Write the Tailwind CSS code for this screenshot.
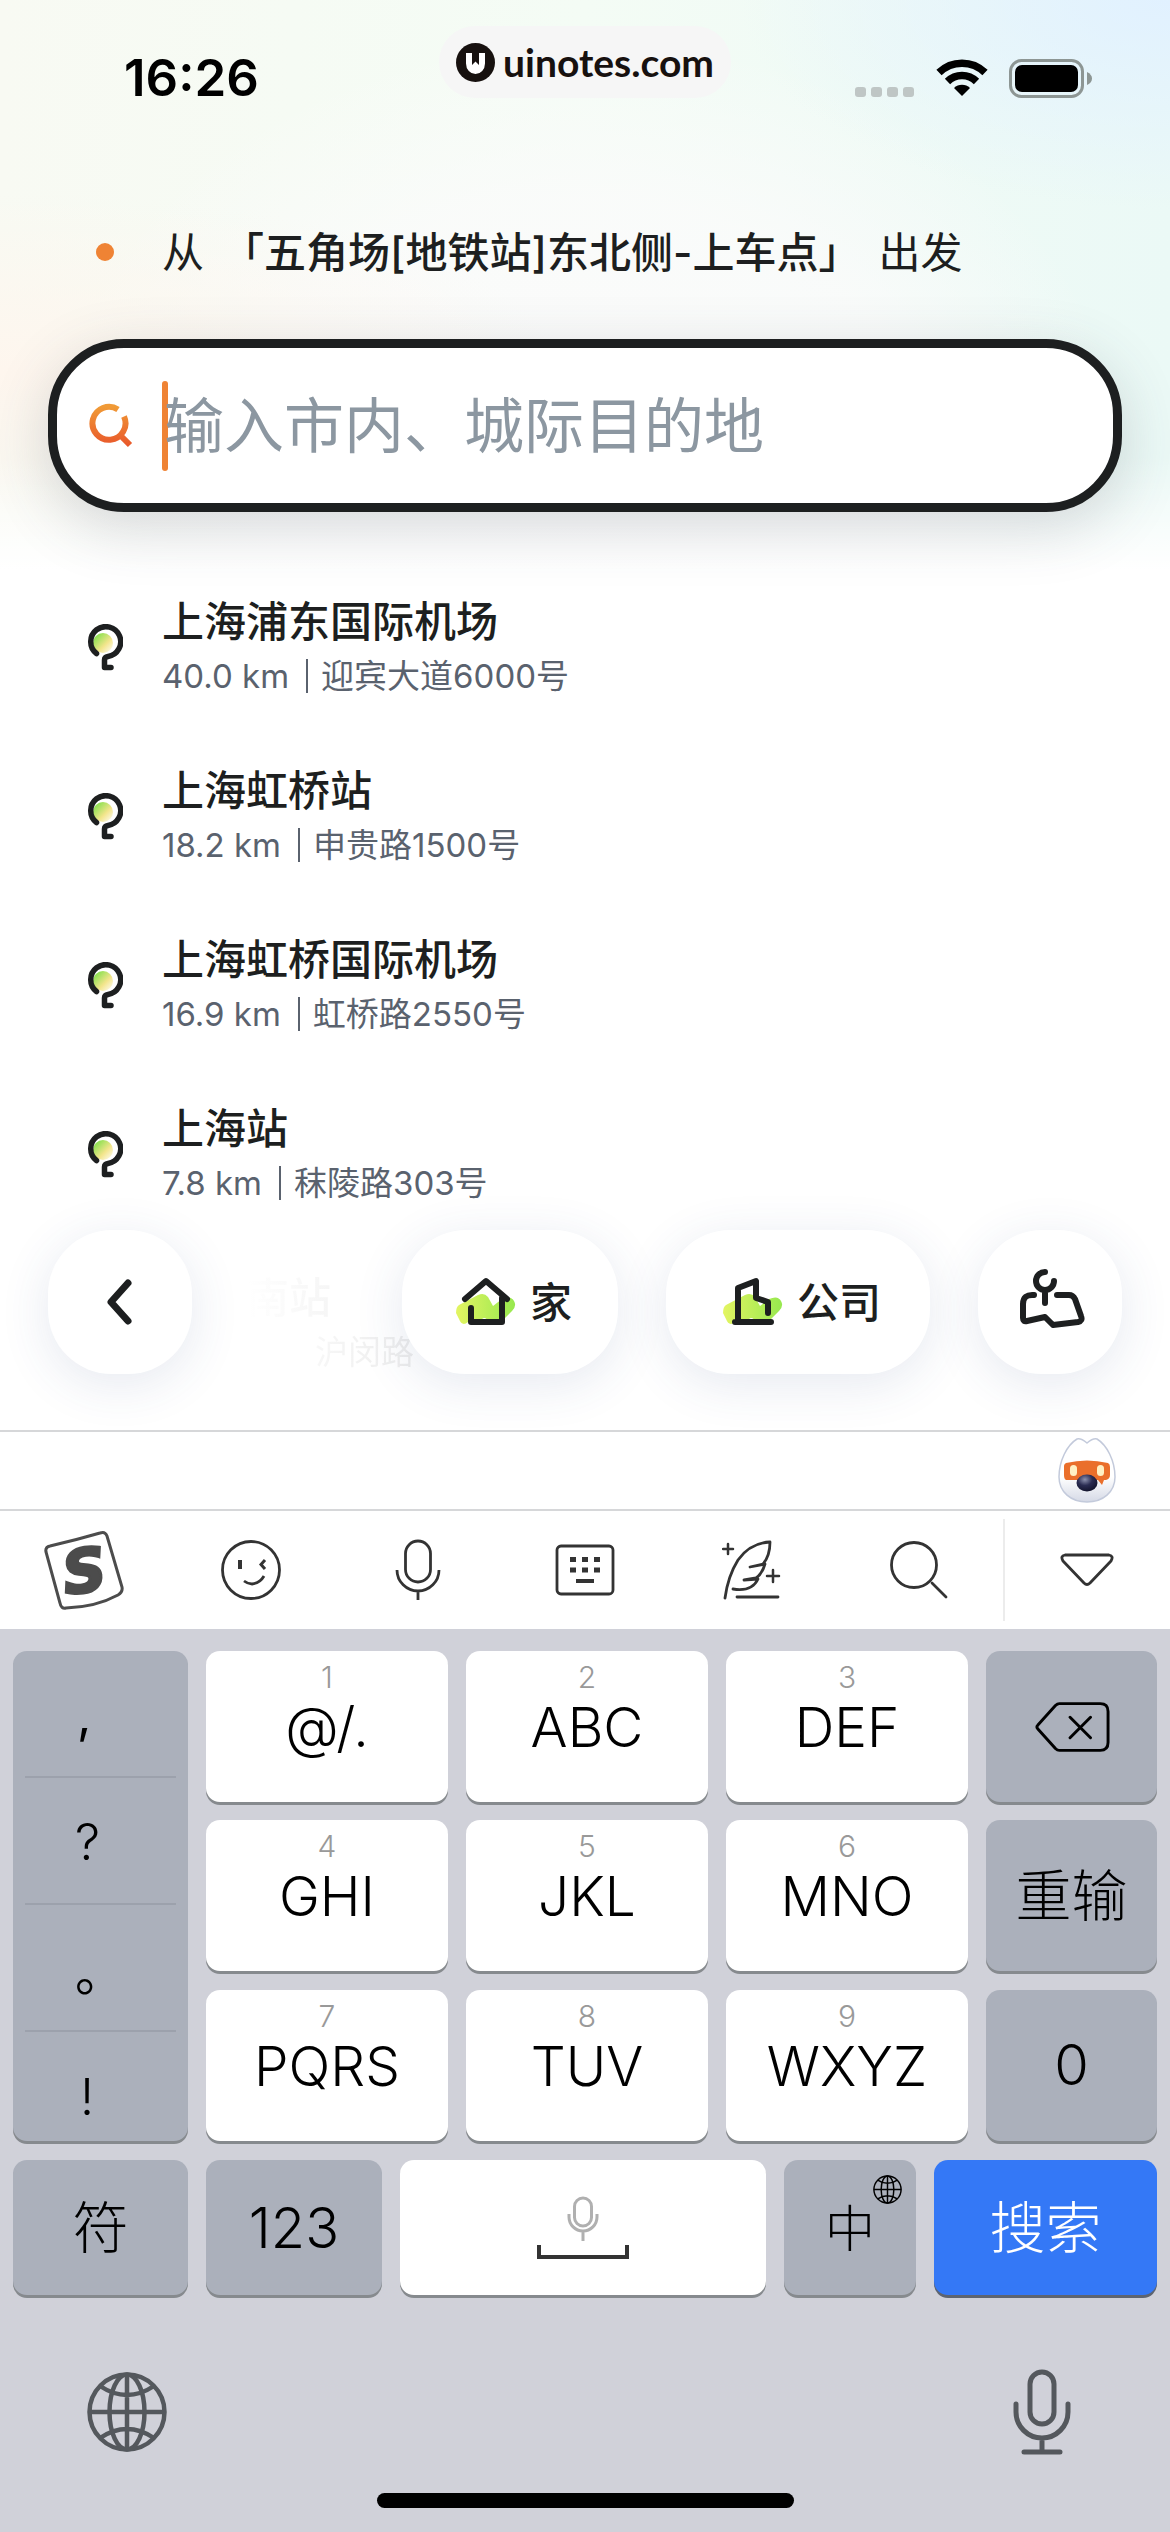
<!DOCTYPE html>
<html lang="zh-CN">
<head>
    <meta charset="UTF-8">
    <meta name="viewport" content="width=device-width, initial-scale=1.0">
    <title>输入目的地</title>
    <script src="https://cdn.jsdelivr.net/npm/@tailwindcss/browser@4"></script>
</head>
<body class="bg-white font-['Inter','Noto_Sans_CJK_SC',sans-serif] text-[#1d1f20]">

    <!-- Shared symbols -->
    <svg class="absolute size-0" aria-hidden="true">
        <defs>
            <linearGradient id="pinFill" x1="0" y1="0" x2="1" y2="1">
                <stop offset="0.1" stop-color="#7fe04a"/>
                <stop offset="0.6" stop-color="#f3e58c"/>
                <stop offset="1" stop-color="#ffffff"/>
            </linearGradient>
            <linearGradient id="searchStroke" x1="0" y1="0" x2="0" y2="1">
                <stop offset="0" stop-color="#f09a36"/>
                <stop offset="1" stop-color="#e9592b"/>
            </linearGradient>
            <linearGradient id="leafFill" x1="0" y1="0" x2="1" y2="0">
                <stop offset="0" stop-color="#e3f562"/>
                <stop offset="1" stop-color="#97e84f"/>
            </linearGradient>
        </defs>
        <symbol id="pin" viewBox="0 0 36 48">
            <circle cx="16" cy="19" r="10" fill="url(#pinFill)"/>
            <path d="M9.500 29.500A15 15 0 1 1 21 32.500Q17.500 33 17.500 36V43.500H24" fill="none" stroke="#1d1f20" stroke-width="5.500" stroke-linecap="round" stroke-linejoin="round"/>
        </symbol>
        <symbol id="globe" viewBox="0 0 80 80">
            <g fill="none" stroke="currentColor">
                <circle cx="40" cy="40" r="37.500"/>
                <ellipse cx="40" cy="40" rx="17.500" ry="37.500"/>
                <path d="M40 2V78M2 40H78M13 14Q40 32 67 14M13 66Q40 48 67 66"/>
            </g>
        </symbol>
    </svg>

    <div class="flex min-h-screen flex-col">
        <main class="relative flex flex-1 flex-col overflow-hidden">
            <!-- Soft colour wash behind the header -->
            <div class="absolute inset-x-0 top-0 -z-10 h-[570px] bg-[linear-gradient(180deg,transparent_80%,#ffffff_100%),radial-gradient(ellipse_at_100%_0%,#e1f1ff_0%,transparent_26%),radial-gradient(ellipse_at_0%_65%,#fef6ee_0%,transparent_34%),radial-gradient(ellipse_at_50%_80%,#fbfbfb_0%,#fbfbfbcc_40%,transparent_65%),linear-gradient(90deg,#f8faf3_0%,#f4fcf5_50%,#ebf9f6_100%)]"></div>

            <!-- Status bar -->
            <header class="relative flex h-[156px] items-center justify-between pr-[78px] pl-[124px]">
                <div class="text-[51px] font-semibold text-black">16:26</div>
                <div class="absolute top-[26px] left-1/2 flex h-[72px] w-[292px] -translate-x-1/2 items-center justify-center gap-2 rounded-[36px] bg-[#f6f6f6]">
                    <svg class="size-[39px]" viewBox="0 0 39 39">
                        <circle cx="19.500" cy="19.500" r="19.500" fill="#17110f"/>
                        <path d="M10 10H16V22L19.500 18.500L23 22V10H29V20.500A9.500 10.500 0 0 1 10 20.500Z" fill="#fff"/>
                    </svg>
                    <span class="font-['Lato',sans-serif] text-[39px] leading-[44px] font-bold text-[#17110f]">uinotes.com</span>
                </div>
                <div class="flex h-[39px] items-center gap-[21px]">
                    <svg class="h-[39px] w-[60px]" viewBox="0 0 60 39" fill="#bfc6c5">
                        <rect x="0" y="28" width="11" height="10" rx="3"/>
                        <rect x="16" y="28" width="11" height="10" rx="3"/>
                        <rect x="32" y="28" width="11" height="10" rx="3"/>
                        <rect x="48" y="28" width="11" height="10" rx="3"/>
                    </svg>
                    <svg class="h-[38px] w-[52px]" viewBox="0 0 52 38">
                        <g fill="none" stroke="#000" stroke-width="7.500">
                            <path d="M3 13.500A33 33 0 0 1 49 13.500"/>
                            <path d="M11.500 22.500A20.500 20.500 0 0 1 40.500 22.500"/>
                        </g>
                        <path d="M26 37L18 29A11.500 11.500 0 0 1 34 29Z"/>
                    </svg>
                    <svg class="h-[39px] w-[83px]" viewBox="0 0 83 39">
                        <rect x="1.500" y="1.500" width="72" height="36" rx="11" fill="none" stroke="#8d9694" stroke-width="3"/>
                        <rect x="6" y="6" width="63" height="27" rx="7"/>
                        <path d="M78 13Q83 15.500 83 19.500T78 26Z" fill="#8d9694"/>
                    </svg>
                </div>
            </header>

            <!-- Start point -->
            <div class="mx-12 mt-[60px] flex h-[72px] items-center text-[42px]">
                <span class="ml-12 size-[18px] rounded-full bg-[#ef8334]"></span>
                <p class="ml-[48px] flex items-center gap-[18px]">
                    <span>从</span>
                    <strong class="font-medium">「五角场[地铁站]东北侧-上车点」</strong>
                    <span>出发</span>
                </p>
            </div>

            <!-- Destination -->
            <label class="mx-12 mt-[51px] flex h-[173px] items-center rounded-[76px] border-[9px] border-[#1d1f20] bg-white pr-10 pl-[31px] shadow-[0_16px_60px_rgba(60,70,85,0.2)]">
                <svg class="size-[46px]" viewBox="0 0 46 46" fill="none" stroke="url(#searchStroke)" stroke-width="6">
                    <path d="M30 6.500A16.500 16.500 0 1 0 36 13.500M31 31L42 42"/>
                </svg>
                <span class="ml-[28px] h-[90px] w-[6px] shrink-0 rounded-full bg-[#ef8334]"></span>
                <input type="text" placeholder="输入市内、城际目的地" aria-label="目的地" class="-ml-1 min-w-0 flex-1 text-[60px] leading-[90px] outline-none placeholder:text-[#8c97a1]">
            </label>

            <!-- Suggestions -->
            <ul class="mt-[82px] flex flex-col gap-[61px] px-[87px]">
                <li class="flex items-center gap-[39px]">
                    <svg class="h-[48px] w-9"><use href="#pin"/></svg>
                    <div>
                        <h2 class="text-[42px] leading-[56px] font-medium">上海浦东国际机场</h2>
                        <p class="flex items-center text-[33px] leading-[52px] text-[#5a626e]">40.0 km<span class="mr-[13px] ml-[17px] h-[34px] w-[2px] bg-[#5a626e]"></span>迎宾大道6000号</p>
                    </div>
                </li>
                <li class="flex items-center gap-[39px]">
                    <svg class="h-[48px] w-9"><use href="#pin"/></svg>
                    <div>
                        <h2 class="text-[42px] leading-[56px] font-medium">上海虹桥站</h2>
                        <p class="flex items-center text-[33px] leading-[52px] text-[#5a626e]">18.2 km<span class="mr-[13px] ml-[17px] h-[34px] w-[2px] bg-[#5a626e]"></span>申贵路1500号</p>
                    </div>
                </li>
                <li class="flex items-center gap-[39px]">
                    <svg class="h-[48px] w-9"><use href="#pin"/></svg>
                    <div>
                        <h2 class="text-[42px] leading-[56px] font-medium">上海虹桥国际机场</h2>
                        <p class="flex items-center text-[33px] leading-[52px] text-[#5a626e]">16.9 km<span class="mr-[13px] ml-[17px] h-[34px] w-[2px] bg-[#5a626e]"></span>虹桥路2550号</p>
                    </div>
                </li>
                <li class="flex items-center gap-[39px]">
                    <svg class="h-[48px] w-9"><use href="#pin"/></svg>
                    <div>
                        <h2 class="text-[42px] leading-[56px] font-medium">上海站</h2>
                        <p class="flex items-center text-[33px] leading-[52px] text-[#5a626e]">7.8 km<span class="mr-[13px] ml-[17px] h-[34px] w-[2px] bg-[#5a626e]"></span>秣陵路303号</p>
                    </div>
                </li>
                <!-- Next row, faded out under the shortcut bar -->
                <li class="ml-[160px] w-[170px] bg-linear-to-r from-white to-[#ececec] bg-clip-text text-transparent">
                    <h2 class="text-[42px] leading-[56px] font-medium">南站</h2>
                    <p class="pl-[68px] text-[33px] leading-[52px]">沪闵路</p>
                </li>
            </ul>

            <!-- Shortcuts -->
            <nav class="absolute inset-x-12 bottom-14 flex gap-12 text-[42px] font-medium">
                <button type="button" aria-label="返回" class="mr-auto flex size-[144px] items-center justify-center rounded-[64px] bg-white shadow-[0_10px_50px_rgba(50,70,130,0.12)]">
                    <svg class="h-[48px] w-[28px]" viewBox="0 0 28 48" fill="none" stroke="#1d1f20" stroke-width="7" stroke-linecap="round" stroke-linejoin="round"><path d="M22 5L5 24L22 43"/></svg>
                </button>
                <button type="button" class="flex h-[144px] w-[216px] items-center justify-center gap-[14px] rounded-[64px] bg-white pl-2 shadow-[0_10px_50px_rgba(50,70,130,0.12)]">
                    <svg class="h-[54px] w-[60px]" viewBox="0 0 60 54">
                        <path d="M3 30L22 20Q28 17 32 22L37 31L46 24Q55 20 58 26Q61 31 56 36L45 47H33Q28 39 24 47H12Q6 52 3 44L0 38Q0 32 3 30Z" fill="url(#leafFill)"/>
                        <path d="M9 24L30 6L51 24M46 23V47H15V33" fill="none" stroke="#1d1f20" stroke-width="6" stroke-linecap="round" stroke-linejoin="round"/>
                    </svg>
                    家
                </button>
                <button type="button" class="flex h-[144px] w-[264px] items-center justify-center gap-[14px] rounded-[64px] bg-white pl-2 shadow-[0_10px_50px_rgba(50,70,130,0.12)]">
                    <svg class="h-[54px] w-[60px]" viewBox="0 0 60 54">
                        <path d="M3 30L22 20Q28 17 32 22L37 31L46 24Q55 20 58 26Q61 31 56 36L45 47H33Q28 39 24 47H12Q6 52 3 44L0 38Q0 32 3 30Z" fill="url(#leafFill)"/>
                        <path d="M12 47H48M15 47V13L33 6V23L45 27V38" fill="none" stroke="#1d1f20" stroke-width="6" stroke-linecap="round" stroke-linejoin="round"/>
                    </svg>
                    公司
                </button>
                <button type="button" aria-label="地图选点" class="flex size-[144px] items-center justify-center rounded-[64px] bg-white pb-2 pl-1 shadow-[0_10px_50px_rgba(50,70,130,0.12)]">
                    <svg class="h-[60px] w-[66px]" viewBox="0 0 66 60" fill="none" stroke="#1d1f20" stroke-width="6" stroke-linecap="round" stroke-linejoin="round">
                        <path d="M26 4A9 9 0 1 0 35 13M26 23V35"/>
                        <path d="M15 27Q4 26 4 36V50Q4 54 8 53L26 49L34 57L59 54Q64 53 62 48L56 31Q54 27 50 27H38"/>
                    </svg>
                </button>
            </nav>
        </main>

        <!-- Candidate strip -->
        <div class="flex h-[79px] items-center justify-end border-t-2 border-[#d6d7d9] bg-white pr-[49px]">
            <svg class="h-[72px] w-[68px]" viewBox="0 0 68 72">
                <defs>
                    <linearGradient id="faceFill" x1="0" y1="0" x2="0" y2="1">
                        <stop offset="0.6" stop-color="#fff"/>
                        <stop offset="1" stop-color="#d5d9e6"/>
                    </linearGradient>
                    <radialGradient id="noseFill" cx="0.4" cy="0.3" r="0.7">
                        <stop offset="0" stop-color="#8b90ad"/>
                        <stop offset="0.5" stop-color="#2a2c52"/>
                        <stop offset="1" stop-color="#14152e"/>
                    </radialGradient>
                </defs>
                <path d="M24 4Q28 3 34 8Q40 3 44 4C54 10 62 26 62 42C62 57 50 67 34 67S6 57 6 42C6 26 14 10 24 4Z" fill="url(#faceFill)" stroke="#c3cadb" stroke-width="1.500"/>
                <path d="M13 28Q34 23 55 28Q57 29 57 32V40Q57 44 53 45H51L49 50L45 45H13Q11 44 11 40V31Q11 29 13 28Z" fill="#ea6f2b"/>
                <rect x="17" y="30" width="7" height="11" rx="3.500" fill="#fff1c4"/>
                <rect x="44" y="30" width="7" height="11" rx="3.500" fill="#fff1c4"/>
                <ellipse cx="34" cy="48" rx="10.500" ry="8.500" fill="url(#noseFill)"/>
            </svg>
        </div>

        <!-- Keyboard toolbar -->
        <div class="grid h-[120px] grid-cols-7 border-t-2 border-[#d6d7d9] bg-white text-[#333333]">
            <button type="button" aria-label="输入法菜单" class="flex items-center justify-center">
                <svg class="size-[80px]" viewBox="0 0 80 80" fill="none" stroke="#4c4c4c" stroke-width="3">
                    <path d="M6 16Q32 10 56 3Q61 1 63 6L78 57Q79 62 74 65Q52 77 22 78Q17 79 16 73L2 22Q1 17 6 16Z"/>
                    <text x="40" y="62" text-anchor="middle" transform="rotate(-8 40 40)" class="font-['DejaVu_Sans',sans-serif] text-[60px] font-bold italic" fill="#4c4c4c">S</text>
                </svg>
            </button>
            <button type="button" aria-label="表情" class="flex items-center justify-center">
                <svg class="size-[62px]" viewBox="0 0 62 62" fill="none" stroke="currentColor" stroke-width="2.800">
                    <circle cx="31" cy="31" r="28.500"/>
                    <path d="M20 21V30" stroke-width="4"/>
                    <path d="M45 21L41 25.500L45 30" stroke-width="3"/>
                    <path d="M24 42Q28 45 32 45Q40 44 44 37"/>
                </svg>
            </button>
            <button type="button" aria-label="语音" class="flex items-center justify-center">
                <svg class="h-[62px] w-[46px]" viewBox="0 0 46 62" fill="none" stroke="currentColor" stroke-width="2.800">
                    <rect x="10.500" y="2" width="25" height="41" rx="12.500"/>
                    <path d="M2 31A21 21 0 0 0 44 31M23 52V61"/>
                </svg>
            </button>
            <button type="button" aria-label="键盘" class="flex items-center justify-center">
                <svg class="h-[52px] w-[60px]" viewBox="0 0 60 52" fill="none" stroke="currentColor" stroke-width="2.800">
                    <rect x="2" y="2" width="56" height="48" rx="4"/>
                    <path d="M15 15.500H45M15 26H45" stroke-width="5" stroke-dasharray="6 6"/>
                    <path d="M21 37H39" stroke-width="4"/>
                </svg>
            </button>
            <button type="button" aria-label="写作" class="flex items-center justify-center">
                <svg class="size-[60px]" viewBox="0 0 60 60" fill="none" stroke="currentColor" stroke-width="2.800" stroke-linecap="round" stroke-linejoin="round">
                    <path d="M3 58Q6 36 16 20Q28 3 48 2Q48 16 41 24L28 27L43 24Q40 34 34 38L22 40L36 39Q30 52 11 49"/>
                    <path d="M15 57H56"/>
                    <path d="M6 4V14M1 9H11M51 30V42M45 36H57" stroke-width="2.500"/>
                </svg>
            </button>
            <button type="button" aria-label="搜索表情" class="flex items-center justify-center">
                <svg class="size-[60px]" viewBox="0 0 60 60" fill="none" stroke="currentColor" stroke-width="2.800" stroke-linecap="round">
                    <circle cx="25" cy="25" r="22.500"/>
                    <path d="M43 43L57 57"/>
                </svg>
            </button>
            <button type="button" aria-label="收起键盘" class="my-2 flex items-center justify-center border-l-2 border-[#ececec]">
                <svg class="h-[34px] w-[56px]" viewBox="0 0 56 34" fill="none" stroke="currentColor" stroke-width="2.800" stroke-linejoin="round">
                    <path d="M6 2H50Q55 3 52 8L31 30Q28 33 25 30L4 8Q1 3 6 2Z"/>
                </svg>
            </button>
        </div>

        <!-- Keyboard -->
        <section class="bg-[#d0d1d9] px-[13px] pt-[22px] font-light text-black">
            <div class="grid grid-cols-[175fr_242fr_242fr_242fr_171fr] grid-rows-3 gap-x-[18px] gap-y-[18px]">
                <div class="row-span-3 flex h-[490px] flex-col overflow-hidden rounded-[14px] bg-[#abb0bb] px-3 text-[50px] shadow-[0_3px_0_#868a8e]">
                    <button type="button" class="h-[127px] shrink-0 border-b-2 border-[#9ca1ac] pt-1 pl-[52px] text-left font-normal">,</button>
                    <button type="button" class="h-[127px] shrink-0 border-b-2 border-[#9ca1ac] pt-1 pl-[50px] text-left">?</button>
                    <button type="button" class="h-[127px] shrink-0 border-b-2 border-[#9ca1ac] pt-3 pl-[50px] text-left font-normal">。</button>
                    <button type="button" class="h-[127px] shrink-0 pt-1 pl-[55px] text-left">!</button>
                </div>
                <button type="button" class="flex h-[151px] flex-col items-center rounded-[14px] bg-white pt-2 text-[55px] leading-[64px] shadow-[0_3px_0_#868a8e]"><small class="text-[30px] leading-[36px] text-[#999999]">1</small>@/.</button>
                <button type="button" class="flex h-[151px] flex-col items-center rounded-[14px] bg-white pt-2 text-[55px] leading-[64px] shadow-[0_3px_0_#868a8e]"><small class="text-[30px] leading-[36px] text-[#999999]">2</small>ABC</button>
                <button type="button" class="flex h-[151px] flex-col items-center rounded-[14px] bg-white pt-2 text-[55px] leading-[64px] shadow-[0_3px_0_#868a8e]"><small class="text-[30px] leading-[36px] text-[#999999]">3</small>DEF</button>
                <button type="button" aria-label="删除" class="flex h-[151px] items-center justify-center rounded-[14px] bg-[#abb0bb] shadow-[0_3px_0_#868a8e]">
                    <svg class="h-[52px] w-[76px]" viewBox="0 0 78 52" fill="none" stroke="#000" stroke-width="3" stroke-linecap="round" stroke-linejoin="round">
                        <path d="M26 2H68Q76 2 76 10V42Q76 50 68 50H26Q24 50 22 48L4 28Q2 26 4 24L22 4Q24 2 26 2ZM37 16L58 37M58 16L37 37"/>
                    </svg>
                </button>
                <button type="button" class="flex h-[151px] flex-col items-center rounded-[14px] bg-white pt-2 text-[55px] leading-[64px] shadow-[0_3px_0_#868a8e]"><small class="text-[30px] leading-[36px] text-[#999999]">4</small>GHI</button>
                <button type="button" class="flex h-[151px] flex-col items-center rounded-[14px] bg-white pt-2 text-[55px] leading-[64px] shadow-[0_3px_0_#868a8e]"><small class="text-[30px] leading-[36px] text-[#999999]">5</small>JKL</button>
                <button type="button" class="flex h-[151px] flex-col items-center rounded-[14px] bg-white pt-2 text-[55px] leading-[64px] shadow-[0_3px_0_#868a8e]"><small class="text-[30px] leading-[36px] text-[#999999]">6</small>MNO</button>
                <button type="button" class="h-[151px] rounded-[14px] bg-[#abb0bb] text-[56px] shadow-[0_3px_0_#868a8e]">重输</button>
                <button type="button" class="flex h-[151px] flex-col items-center rounded-[14px] bg-white pt-2 text-[55px] leading-[64px] shadow-[0_3px_0_#868a8e]"><small class="text-[30px] leading-[36px] text-[#999999]">7</small>PQRS</button>
                <button type="button" class="flex h-[151px] flex-col items-center rounded-[14px] bg-white pt-2 text-[55px] leading-[64px] shadow-[0_3px_0_#868a8e]"><small class="text-[30px] leading-[36px] text-[#999999]">8</small>TUV</button>
                <button type="button" class="flex h-[151px] flex-col items-center rounded-[14px] bg-white pt-2 text-[55px] leading-[64px] shadow-[0_3px_0_#868a8e]"><small class="text-[30px] leading-[36px] text-[#999999]">9</small>WXYZ</button>
                <button type="button" class="h-[151px] rounded-[14px] bg-[#abb0bb] text-[56px] shadow-[0_3px_0_#868a8e]">0</button>
            </div>

            <div class="mt-[19px] grid h-[135px] grid-cols-[175fr_176fr_366fr_132fr_223fr] gap-x-[18px] text-[56px]">
                <button type="button" class="rounded-[14px] bg-[#abb0bb] shadow-[0_3px_0_#868a8e]">符</button>
                <button type="button" class="rounded-[14px] bg-[#abb0bb] shadow-[0_3px_0_#868a8e]">123</button>
                <button type="button" aria-label="空格" class="flex items-center justify-center rounded-[14px] bg-white shadow-[0_3px_0_#868a8e]">
                    <svg class="h-[64px] w-[92px]" viewBox="0 0 92 64" fill="none">
                        <g stroke="#b0b0b0" stroke-width="3">
                            <rect x="37.500" y="2" width="17" height="28" rx="8.500"/>
                            <path d="M32 18V21A14 14 0 0 0 60 21V18M46 35V45"/>
                        </g>
                        <path d="M2 49V61H90V49" stroke="#333333" stroke-width="4"/>
                    </svg>
                </button>
                <button type="button" class="relative rounded-[14px] bg-[#abb0bb] pt-1 text-[50px] shadow-[0_3px_0_#868a8e]">
                    中
                    <svg class="absolute top-[15px] right-[14px] size-[29px]" stroke-width="4"><use href="#globe"/></svg>
                </button>
                <button type="button" class="rounded-[14px] bg-[#3478f6] text-white shadow-[0_3px_0_#5d6470]">搜索</button>
            </div>

            <div class="flex h-[198px] items-center justify-between pt-[36px] pr-[86px] pl-[74px] text-[#54585d]">
                <button type="button" aria-label="切换输入法">
                    <svg class="size-[80px]" stroke-width="4.500"><use href="#globe"/></svg>
                </button>
                <button type="button" aria-label="听写">
                    <svg class="h-[86px] w-[58px]" viewBox="0 0 58 86" fill="none" stroke="currentColor" stroke-width="5" stroke-linecap="round">
                        <rect x="17" y="3" width="24" height="52" rx="12"/>
                        <path d="M3 35V43A26 26 0 0 0 55 43V35M29 69V82M11 83H47"/>
                    </svg>
                </button>
            </div>
            <div class="mx-auto mb-6 h-[15px] w-[417px] rounded-full bg-black"></div>
        </section>
    </div>
</body>
</html>
